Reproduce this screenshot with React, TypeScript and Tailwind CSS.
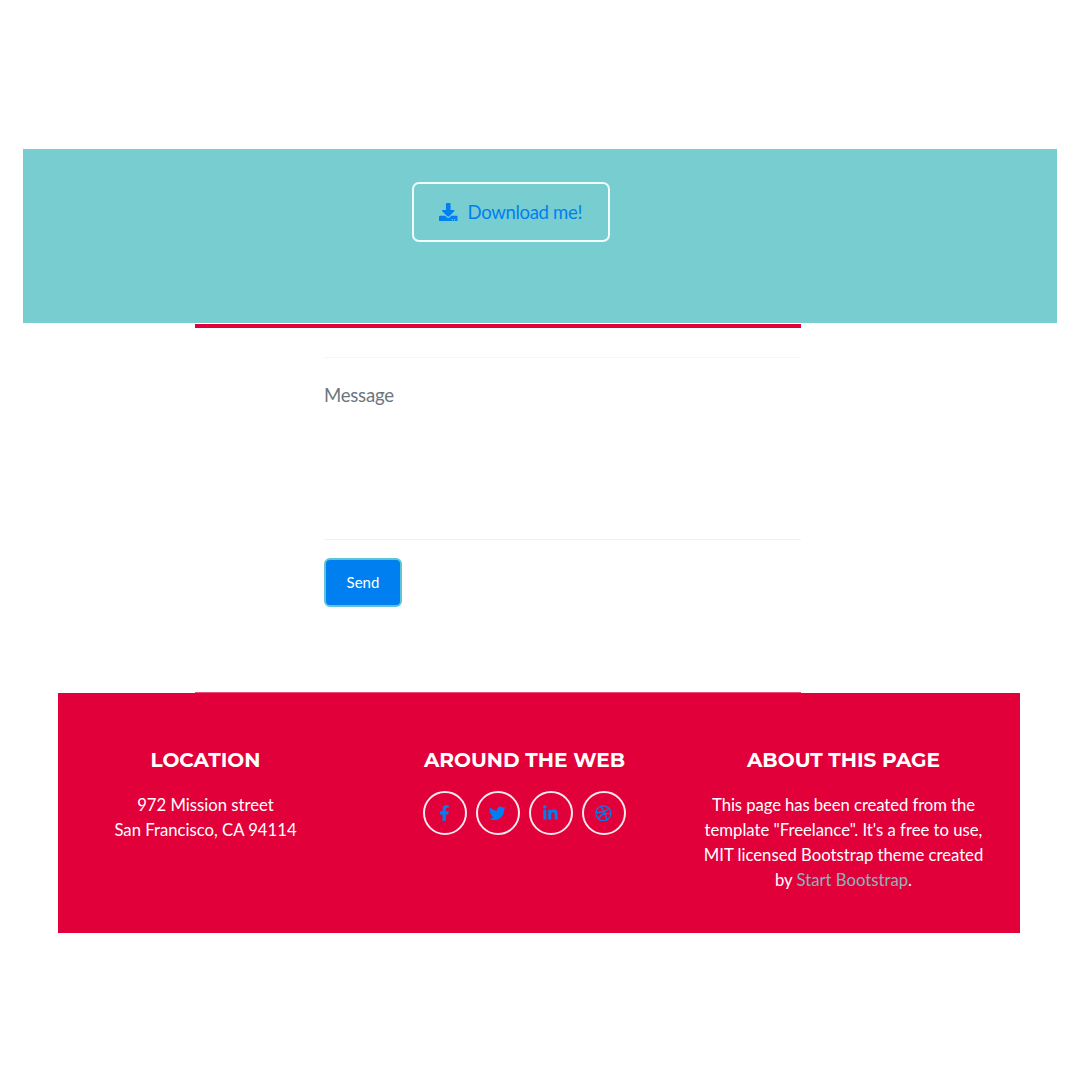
import React from 'react';
import { FaDownload, FaFacebookF, FaTwitter, FaLinkedinIn, FaDribbble } from 'react-icons/fa';

const socials = [
  { label: 'Facebook', Icon: FaFacebookF },
  { label: 'Twitter', Icon: FaTwitter },
  { label: 'LinkedIn', Icon: FaLinkedinIn },
  { label: 'Dribbble', Icon: FaDribbble },
];

function Heading({ children }: { children: React.ReactNode }) {
  return (
    <h4 className="flex h-6 items-center justify-center whitespace-nowrap font-['Montserrat','Inter',sans-serif] text-[20.1px] font-bold leading-6">
      {children}
    </h4>
  );
}

function DownloadBanner() {
  return (
    <section className="ml-[23px] h-[174px] w-[1034px] bg-[#78cdd1] pl-[389px] pt-[33px]">
      <a
        href="#"
        className="flex h-[60px] w-[198px] items-center rounded-[7px] border-2 border-[#f3fafb] pl-[25px] text-[18.6px] leading-7 tracking-[-0.36px] text-[#0080f0]"
      >
        <FaDownload className="mr-[10px] size-[18.5px]" />
        <span className="whitespace-nowrap">Download me!</span>
      </a>
    </section>
  );
}

function ContactForm() {
  return (
    <form className="ml-[195px] mt-px w-[606px]">
      <div className="h-1 bg-[#e2003b]" />
      <div className="ml-[129px]">
        <div className="mt-[29px] border-t border-[#f6f6f6]" />
        <div className="h-[181px] pt-[22.5px] text-[18.6px] leading-7 tracking-[-0.25px] text-[#6c757d]">Message</div>
        <div className="border-t border-[#f2f2f2]" />
        <button
          type="button"
          className="mt-[18px] flex h-[49px] w-[78px] items-center justify-center rounded-[6px] border-2 border-[#5fc5d6] bg-[#0080f0] text-[15px] text-white"
        >
          Send
        </button>
      </div>
      <div className="mt-[85px] h-px bg-[#ea5078]" />
    </form>
  );
}

function Footer() {
  return (
    <footer className="ml-[58px] flex h-60 w-[962px] bg-[#e1003a] pt-[55px] text-center text-[16.7px] leading-[25px] text-white">
      <div className="ml-[-13px] w-[321px]">
        <Heading>LOCATION</Heading>
        <p className="mt-[21px]">
          972 Mission street
          <br />
          San Francisco, CA 94114
        </p>
      </div>
      <div className="ml-[-2px] mr-[2px] w-[321px]">
        <Heading>AROUND THE WEB</Heading>
        <div className="mt-[19px] flex justify-center gap-[9px]">
          {socials.map(({ label, Icon }) => (
            <a
              key={label}
              href="#"
              aria-label={label}
              className="flex size-11 items-center justify-center rounded-full border-2 border-[#fbe9ee] pr-px text-[#0080f0]"
            >
              <Icon className="size-[16.7px]" />
            </a>
          ))}
        </div>
      </div>
      <div className="w-[313px]">
        <Heading>ABOUT THIS PAGE</Heading>
        <p className="mt-[21px] whitespace-nowrap">
          <span className="tracking-[-0.08px]">This page has been created from the</span>
          <br />
          template "Freelance". It's a free to use,
          <br />
          MIT licensed Bootstrap theme created
          <br />
          by <a href="#" className="text-[#8db4bd]">Start Bootstrap</a>.
        </p>
      </div>
    </footer>
  );
}

export default function App() {
  return (
    <main className="h-[1080px] w-[1080px] bg-white pt-[149px] font-['Lato',sans-serif]">
      <DownloadBanner />
      <ContactForm />
      <Footer />
    </main>
  );
}
